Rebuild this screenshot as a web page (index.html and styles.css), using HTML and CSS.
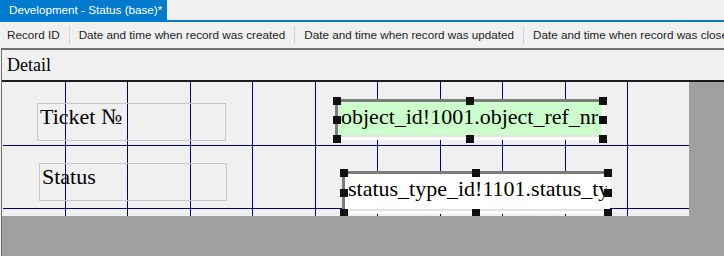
FILE: index.html
```html
<!DOCTYPE html>
<html>
<head>
<meta charset="utf-8">
<link rel="stylesheet" href="styles.css">
</head>
<body>
<div class="app">
  <div class="tabbar">
    <div class="tab">Development - Status (base)*</div>
  </div>
  <div class="toolbar">
    <span class="col">Record ID</span>
    <span class="sep"></span>
    <span class="col">Date and time when record was created</span>
    <span class="sep"></span>
    <span class="col">Date and time when record was updated</span>
    <span class="sep"></span>
    <span class="col">Date and time when record was closed</span>
  </div>
  <div class="frame">
    <div class="band">Detail</div>
    <div class="workspace">
      <div class="canvas">
        <div class="label label-ticket">Ticket №</div>
        <div class="label label-status">Status</div>

        <div class="ctl ctl-ticket">
          <div class="field field-green">object_id!1001.object_ref_nr</div>
          <span class="h tl"></span><span class="h tc"></span><span class="h tr"></span>
          <span class="h ml"></span><span class="h mr"></span>
          <span class="h bl"></span><span class="h bc"></span><span class="h br"></span>
        </div>

        <div class="ctl ctl-status">
          <div class="field field-white">status_type_id!1101.status_type_name</div>
          <span class="h tl"></span><span class="h tc"></span><span class="h tr"></span>
          <span class="h ml"></span><span class="h mr"></span>
          <span class="h bl"></span><span class="h bc"></span><span class="h br"></span>
        </div>
      </div>
    </div>
  </div>
</div>
</body>
</html>
```

FILE: styles.css
```css
html, body {
  margin: 0;
  padding: 0;
  background: #f0f0f0;
}

.app {
  width: 724px;
  height: 256px;
  display: flex;
  flex-direction: column;
  overflow: hidden;
  font-family: "Liberation Sans", Arial, sans-serif;
}

.tabbar {
  height: 20px;
  border-bottom: 2px solid #007acc;
  display: flex;
  flex: none;
}

.tab {
  width: 167px;
  box-sizing: border-box;
  padding-left: 9px;
  background: #007acc;
  color: #ffffff;
  font-size: 11.7px;
  line-height: 20px;
  white-space: nowrap;
}

.toolbar {
  height: 26px;
  flex: none;
  display: flex;
  align-items: center;
  gap: 9px;
  padding-left: 7px;
  white-space: nowrap;
  overflow: hidden;
  font-size: 11.7px;
  color: #1e1e1e;
}

.col {
  flex: none;
  line-height: 26px;
}

.sep {
  flex: none;
  width: 1px;
  height: 19px;
  background: #d4d4d4;
}

.frame {
  flex: 1;
  display: flex;
  flex-direction: column;
  margin-left: 1px;
  border-left: 1px solid #6e6e6e;
  border-top: 2px solid #6e6e6e;
  min-height: 0;
}

.band {
  height: 30px;
  flex: none;
  box-sizing: border-box;
  padding-left: 5px;
  font-family: "Liberation Serif", "Times New Roman", serif;
  font-size: 18px;
  line-height: 30px;
  color: #000;
  border-bottom: 2px solid #1c1c1c;
  height: 32px;
}

.workspace {
  flex: 1;
  background: #a0a0a0;
  min-height: 0;
}

.canvas {
  position: relative;
  box-sizing: border-box;
  width: 687px;
  height: 134px;
  overflow: hidden;
  border-left: 1px solid #f0f0f0;
  background-color: #f0f0f0;
  background-image:
    linear-gradient(to bottom,
      transparent 63px, #000080 63px, #000080 64px, transparent 64px,
      transparent 126px, #000080 126px, #000080 127px, transparent 127px),
    linear-gradient(to right,
      transparent 62px, #000080 62px, #000080 63px, transparent 63px,
      transparent 124px, #000080 124px, #000080 125px, transparent 125px);
  background-size: 100% 100%, 125px 100%;
  background-repeat: no-repeat, repeat-x;
  background-position: 0 0, 0 0;
}

.label {
  position: absolute;
  box-sizing: border-box;
  height: 38px;
  border: 1px solid #c8c8c8;
  padding-left: 2px;
  font-family: "Liberation Serif", "Times New Roman", serif;
  font-size: 22px;
  line-height: 26px;
  color: #000;
  white-space: nowrap;
}

.label-ticket {
  left: 34px;
  top: 21px;
  width: 189px;
}

.label-status {
  left: 36px;
  top: 81px;
  width: 188px;
  padding-left: 2px;
}

.ctl {
  position: absolute;
}

.ctl-ticket {
  left: 330px;
  top: 15px;
  width: 274px;
  height: 46px;
}

.ctl-status {
  left: 337px;
  top: 87px;
  width: 272px;
  height: 48px;
}

.field {
  position: absolute;
  top: 2px;
  left: 2px;
  right: 2px;
  bottom: 3px;
  border-top: 3px solid #7c7c7c;
  border-left: 3px solid #7c7c7c;
  border-right: 3px solid #ffffff;
  border-bottom: 3px solid #ffffff;
  box-shadow: inset 0 -2px 0 #e2e2e2;
  padding: 2px 0 0 3px;
  font-family: "Liberation Serif", "Times New Roman", serif;
  font-size: 22px;
  line-height: 26px;
  color: #000;
  white-space: nowrap;
  overflow: hidden;
}

.field-green {
  background: #ccffcc;
}

.field-white {
  background: #ffffff;
}

.h {
  position: absolute;
  width: 8px;
  height: 8px;
  background: #111111;
}

.tl { left: 0; top: 0; }
.tc { left: calc(50% - 4px); top: 0; }
.tr { right: 0; top: 0; }
.ml { left: 0; top: calc(50% - 4px); }
.mr { right: 0; top: calc(50% - 4px); }
.bl { left: 0; bottom: 0; }
.bc { left: calc(50% - 4px); bottom: 0; }
.br { right: 0; bottom: 0; }
```
